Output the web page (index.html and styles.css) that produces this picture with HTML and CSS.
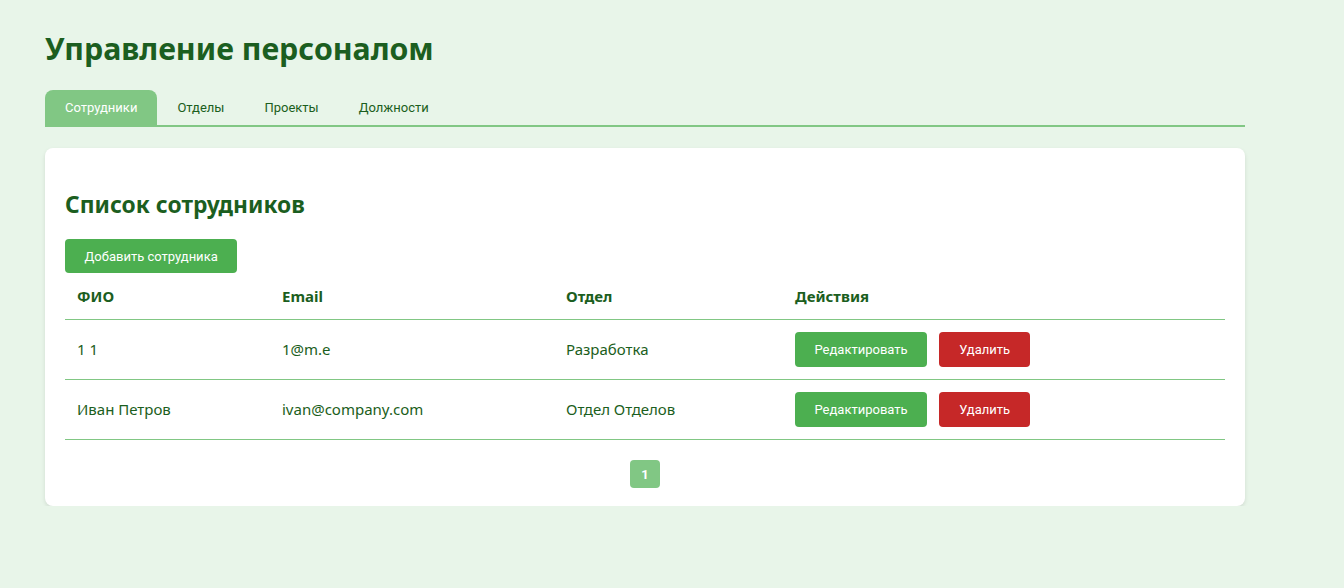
FILE: index.html
```html
<!DOCTYPE html>
<html lang="ru">
<head>
<meta charset="utf-8">
<title>Управление персоналом</title>
<link rel="stylesheet" href="styles.css">
</head>
<body>
<div class="container">
  <h1 class="title">Управление персоналом</h1>
  <nav class="tabs">
    <button class="tab active">Сотрудники</button>
    <button class="tab">Отделы</button>
    <button class="tab">Проекты</button>
    <button class="tab">Должности</button>
  </nav>
  <section class="card">
    <h2 class="card-title">Список сотрудников</h2>
    <button class="btn btn-green">Добавить сотрудника</button>
    <table class="table">
      <thead>
        <tr><th class="c1">ФИО</th><th class="c2">Email</th><th class="c3">Отдел</th><th>Действия</th></tr>
      </thead>
      <tbody>
        <tr>
          <td>1 1</td><td>1@m.e</td><td>Разработка</td>
          <td><div class="actions"><button class="btn btn-green">Редактировать</button><button class="btn btn-red">Удалить</button></div></td>
        </tr>
        <tr>
          <td>Иван Петров</td><td>ivan@company.com</td><td>Отдел Отделов</td>
          <td><div class="actions"><button class="btn btn-green">Редактировать</button><button class="btn btn-red">Удалить</button></div></td>
        </tr>
      </tbody>
    </table>
    <div class="pagination"><button class="page active">1</button></div>
  </section>
</div>
</body>
</html>
```

FILE: styles.css
```css
* { box-sizing: border-box; }
html, body { margin: 0; padding: 0; }
body {
  background: #e8f5e9;
  font-family: "Noto Sans", "Open Sans", sans-serif;
  color: #1b5e20;
}
.container {
  width: 1200px;
  margin-left: 45px;
  padding-top: 28px;
}
.title {
  margin: 0 0 20px;
  font-size: 30.3px;
  line-height: 42px;
  font-weight: 700;
  color: #1b5e20;
}
.tabs {
  display: flex;
  border-bottom: 2px solid #81c784;
}
.tab {
  border: none;
  background: transparent;
  font-family: Roboto, "Liberation Sans", sans-serif;
  font-size: 13px;
  color: #1b5e20;
  padding: 0 20px;
  height: 35px;
  border-radius: 8px 8px 0 0;
  cursor: pointer;
}
.tab.active {
  background: #81c784;
  color: #fff;
}
.card {
  margin-top: 21px;
  background: #fff;
  border-radius: 8px;
  box-shadow: 0 2px 4px rgba(0,0,0,0.1);
  padding: 20px 20px 18px;
}
.card-title {
  margin: 20px 0 17px;
  font-size: 22.8px;
  line-height: 34px;
  font-weight: 700;
  color: #1b5e20;
}
.btn {
  border: none;
  border-radius: 4px;
  color: #fff;
  font-family: Roboto, "Liberation Sans", sans-serif;
  font-size: 13px;
  height: 35px;
  padding: 0 20px;
  cursor: pointer;
}
.btn-green { background: #4caf50; }
.btn-red { background: #c62828; }
.card > .btn { height: 34px; padding: 0 19.5px; }
.table {
  width: 100%;
  border-collapse: collapse;
  font-size: 15px;
}
.table th, .table td {
  text-align: left;
  padding: 12px;
  border-bottom: 1px solid #81c784;
  color: #1b5e20;
  vertical-align: middle;
}
.table th {
  font-weight: 700;
  font-size: 15px;
  line-height: 22px;
}
.table td { line-height: 35px; }
.c1 { width: 205px; }
.c2 { width: 284px; }
.c3 { width: 229px; }
.actions { display: flex; gap: 12px; }
.actions .btn { padding: 0 19.5px; }
.actions .btn-red { padding: 0 20px; }
.pagination {
  display: flex;
  justify-content: center;
  margin-top: 20px;
}
.page {
  border: none;
  border-radius: 4px;
  width: 30px;
  height: 28px;
  background: #81c784;
  color: #fff;
  font-family: Roboto, "Liberation Sans", sans-serif;
  font-size: 13px;
  font-weight: 700;
}
```
